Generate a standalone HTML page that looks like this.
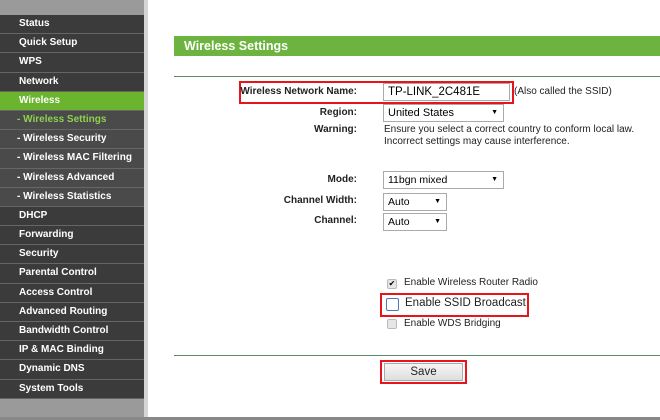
<!DOCTYPE html><html><head><style>
body{margin:0;width:660px;height:420px;background:#fff;font-family:"Liberation Sans",Arial,sans-serif;position:relative;overflow:hidden}
#sb{position:absolute;left:0;top:0;width:144px;height:418px;background:#9a9a9a}
#sb .top{height:15px}
#sb div.i{height:18.2px;border-bottom:1px solid #666;background:#3b3b3b;color:#fff;font-weight:bold;font-size:10px;line-height:18px;padding-left:19px;box-sizing:content-box;white-space:nowrap}
#sb div.g{background:#6ab42e}
#sb div.s{background:#4a4a4a;padding-left:17px}
#sb div.a{color:#8fd14f}
#sep{position:absolute;left:144px;top:0;width:4px;height:420px;background:#d4d4d4}
.bot{position:absolute;left:0;top:417px;width:660px;height:3px;background:#888}
.ab{position:absolute;font-size:10px;color:#222;white-space:nowrap}
.l{font-weight:bold;text-align:right;width:200px;left:157px}
.sel{position:absolute;border:1px solid #aaa;background:#fff;font-size:10.5px;line-height:16px;padding-left:4px;box-sizing:border-box}
.sel:after{content:"▼";position:absolute;right:5px;top:0;font-size:7px}
.sel.n:after{content:""}
.red{position:absolute;border:2px solid #e8141b;box-sizing:border-box}
.cb{position:absolute;width:10px;height:10px;border:1px solid #bbb;background:#e6e6e6;box-sizing:border-box;border-radius:2px}
</style></head><body>
<div id="sb"><div class="top"></div>
<div class="i">Status</div><div class="i">Quick Setup</div><div class="i">WPS</div><div class="i">Network</div><div class="i g">Wireless</div>
<div class="i s a">- Wireless Settings</div><div class="i s">- Wireless Security</div><div class="i s">- Wireless MAC Filtering</div><div class="i s">- Wireless Advanced</div><div class="i s">- Wireless Statistics</div>
<div class="i">DHCP</div><div class="i">Forwarding</div><div class="i">Security</div><div class="i">Parental Control</div><div class="i">Access Control</div><div class="i">Advanced Routing</div><div class="i">Bandwidth Control</div><div class="i">IP &amp; MAC Binding</div><div class="i">Dynamic DNS</div><div class="i">System Tools</div>
</div>
<div id="sep"></div>
<div style="position:absolute;left:174px;top:36px;width:486px;height:20px;background:#6cb33f;color:#fff;font-weight:bold;font-size:12.5px;line-height:20px;padding-left:10px;box-sizing:border-box">Wireless Settings</div>
<div style="position:absolute;left:174px;top:76px;width:486px;height:1px;background:#5d8a6a"></div>
<div style="position:absolute;left:174px;top:355px;width:486px;height:1px;background:#5d8a6a"></div>
<div class="red" style="left:239px;top:81px;width:275px;height:23px"></div>
<div class="ab l" style="top:86px">Wireless Network Name:</div>
<div class="sel n" style="left:383px;top:83px;width:127px;height:18px;font-size:11.5px;line-height:16px">TP-LINK_2C481E</div>
<div class="ab" style="left:514px;top:86px">(Also called the SSID)</div>
<div class="ab l" style="top:107px">Region:</div>
<div class="sel" style="left:383px;top:104px;width:121px;height:18px;font-size:11px">United States</div>
<div class="ab l" style="top:124px">Warning:</div>
<div class="ab" style="left:384px;top:124px;line-height:12px">Ensure you select a correct country to conform local law.<br>Incorrect settings may cause interference.</div>
<div class="ab l" style="top:174px">Mode:</div>
<div class="sel" style="left:383px;top:171px;width:121px;height:18px">11bgn mixed</div>
<div class="ab l" style="top:195px">Channel Width:</div>
<div class="sel" style="left:383px;top:193px;width:64px;height:18px">Auto</div>
<div class="ab l" style="top:215px">Channel:</div>
<div class="sel" style="left:383px;top:213px;width:64px;height:18px">Auto</div>
<div class="cb" style="left:387px;top:279px;font-size:8px;line-height:8px;text-align:center">✔</div>
<div class="ab" style="left:404px;top:277px">Enable Wireless Router Radio</div>
<div class="red" style="left:380px;top:293px;width:149px;height:24px"></div>
<div class="cb" style="left:386px;top:298px;width:13px;height:13px;background:#fff;border:1px solid #4a78c0"></div>
<div class="ab" style="left:405px;top:297px;font-size:11.5px">Enable SSID Broadcast</div>
<div class="cb" style="left:387px;top:319px"></div>
<div class="ab" style="left:404px;top:318px">Enable WDS Bridging</div>
<div class="red" style="left:380px;top:360px;width:87px;height:24px"></div>
<div style="position:absolute;left:384px;top:363px;width:79px;height:18px;border:1px solid #aaa;box-sizing:border-box;background:linear-gradient(#f6f6f6,#dedede);font-size:11.5px;line-height:16px;text-align:center;color:#222">Save</div>
<div class="bot"></div>
</body></html>
